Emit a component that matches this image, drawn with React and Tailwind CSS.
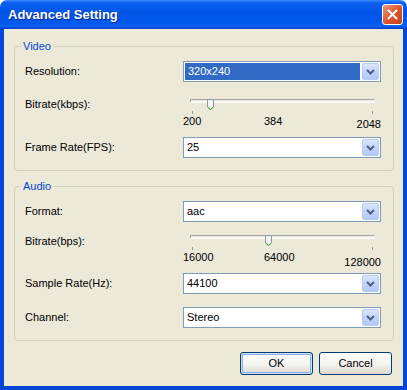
// Advanced Setting dialog, XP Luna look

const FONT = { fontFamily: '"Liberation Sans", Arial, sans-serif' };

function Chevron() {
  return (
    <svg width="9" height="6" viewBox="0 0 9 6">
      <path d="M1 1 L4.5 4.5 L8 1" fill="none" stroke="#4d6185" strokeWidth="2" />
    </svg>
  );
}

function Combo({ value, selected }) {
  return (
    <div className="flex h-[21px] w-[198px] border border-[#7f9db9] bg-white p-px">
      {selected ? (
        <div className="flex flex-1 items-center bg-[#316ac5] pl-[3px] text-white">{value}</div>
      ) : (
        <div className="flex flex-1 items-center pl-[2px] text-black">{value}</div>
      )}
      <div className="ml-[2px] flex w-[17px] items-center justify-center rounded-[2px] border border-[#b8cbf5] bg-[linear-gradient(to_bottom,#dce6fd,#c2d4fb_50%,#b3c8f7)]">
        <Chevron />
      </div>
    </div>
  );
}

function Thumb() {
  return (
    <svg width="7" height="12" viewBox="0 0 7 12">
      <path d="M0.5 0.5 H6.5 V8 L3.5 11 L0.5 8 Z" fill="#f5f5f1" stroke="#8a96a3" />
      <path d="M1.2 8.3 L3.5 10.3 L5.8 8.3" fill="none" stroke="#2fb82f" strokeWidth="1" />
    </svg>
  );
}

function Slider({ left, min, mid, max, lastDrop }) {
  return (
    <div className="w-[198px]">
      <div className="relative h-[12px]">
        <div className="ml-[7px] mr-[6px] mt-[3px] h-[4px] rounded-[1px] border border-t-[#a3a39d] border-l-[#a3a39d] border-b-white border-r-white bg-[#f1f0ea]" />
        <div className="absolute top-0" style={{ left }}>
          <Thumb />
        </div>
      </div>
      <div className="flex justify-between pl-[9px] pr-[8px]">
        <div className="h-[3px] w-px bg-[#9a9a94]" />
        <div className="h-[3px] w-px bg-[#9a9a94]" />
      </div>
      <div className="mt-[1px] grid grid-cols-[81px_1fr_auto] text-black">
        <span>{min}</span>
        <span>{mid}</span>
        <span className={lastDrop}>{max}</span>
      </div>
    </div>
  );
}

function Row({ label, children, className }) {
  return (
    <div className={"flex items-center " + className}>
      <div className="w-[158px] text-black">{label}</div>
      {children}
    </div>
  );
}

function Group({ title, className, children }) {
  return (
    <div className={"relative rounded-[4px] border border-[#d0d0bf] pl-[10px] pb-[12px] pt-[14px] " + className}>
      <span className="absolute -top-[7px] left-[6px] bg-[#ece9d8] px-[2px] leading-[13px] text-[#0046d5]">{title}</span>
      {children}
    </div>
  );
}

function XPButton({ children, isDefault }) {
  return (
    <button
      className={
        isDefault
          ? "h-[23px] w-[73px] rounded-[3px] border border-[#003c74] bg-[linear-gradient(to_bottom,#ffffff,#f3f3ef_55%,#dcd7cc)] text-black shadow-[inset_0_0_0_1px_#cfdefc,inset_0_0_0_2px_#8aaeef]"
          : "h-[23px] w-[73px] rounded-[3px] border border-[#003c74] bg-[linear-gradient(to_bottom,#ffffff,#f3f3ef_55%,#dcd7cc)] text-black"
      }
    >
      {children}
    </button>
  );
}

export default function App() {
  return (
    <div className="h-[390px] w-[407px] bg-white text-[11px] leading-[13px]" style={FONT}>
      <div className="flex h-full flex-col">
        <div className="flex h-[29px] items-center justify-between rounded-t-[7px] bg-[linear-gradient(to_bottom,#3b8cff_0%,#0a5ef0_10%,#0055e6_45%,#0058ea_80%,#0a62f2_90%,#003fc8_100%)] pl-[8px] pr-[4px]">
          <span className="text-[13px] font-bold text-white [text-shadow:1px_1px_#0a2a8a]">Advanced Setting</span>
          <div className="flex h-[21px] w-[21px] items-center justify-center rounded-[3px] border border-white bg-[linear-gradient(135deg,#ee9a7c,#d9532a_55%,#c5401c)]">
            <svg width="11" height="11" viewBox="0 0 11 11">
              <path d="M1.5 1.5 L9.5 9.5 M9.5 1.5 L1.5 9.5" stroke="white" strokeWidth="2" strokeLinecap="round" />
            </svg>
          </div>
        </div>

        <div className="flex flex-1 flex-col border-x-4 border-b-4 border-[#0546d8] bg-[#ece9d8] pl-[10px] pr-[9px]">
          <Group title="Video" className="mt-[17px]">
            <Row label="Resolution:">
              <Combo value="320x240" selected />
            </Row>
            <div className="mt-[14px] flex items-start">
              <div className="mt-[2px] w-[158px] text-black">Bitrate(kbps):</div>
              <Slider left={24} min="200" mid="384" max="2048" lastDrop="mt-[3px]" />
            </div>
            <Row label="Frame Rate(FPS):" className="mt-[6px]">
              <Combo value="25" />
            </Row>
          </Group>

          <Group title="Audio" className="mt-[15px]">
            <Row label="Format:">
              <Combo value="aac" />
            </Row>
            <div className="mt-[10px] flex items-start">
              <div className="mt-[3px] w-[158px] text-black">Bitrate(bps):</div>
              <Slider left={82} min="16000" mid="64000" max="128000" lastDrop="mt-[5px]" />
            </div>
            <Row label="Sample Rate(Hz):" className="mt-[4px]">
              <Combo value="44100" />
            </Row>
            <Row label="Channel:" className="mt-[13px]">
              <Combo value="Stereo" />
            </Row>
          </Group>

          <div className="mt-[11px] flex justify-end gap-[6px] pr-[2px]">
            <XPButton isDefault>OK</XPButton>
            <XPButton>Cancel</XPButton>
          </div>
        </div>
      </div>
    </div>
  );
}
